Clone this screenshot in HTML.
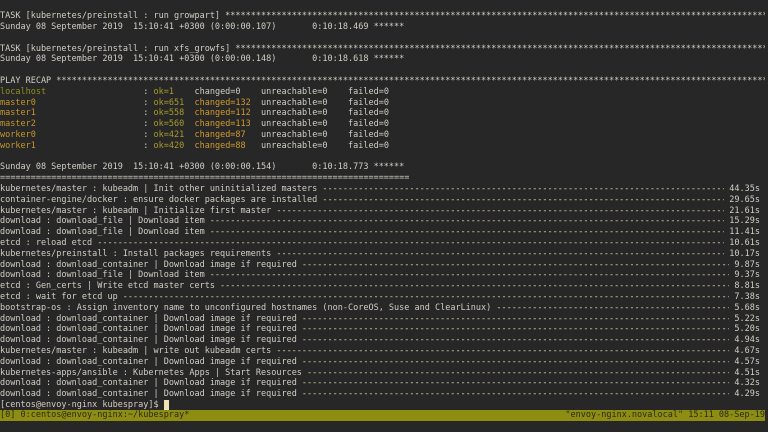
<!DOCTYPE html>
<html><head><meta charset="utf-8"><style>
html,body{margin:0;padding:0;background:#272727;width:768px;height:432px;overflow:hidden}
body{font-family:"DejaVu Sans Mono","Liberation Mono",monospace;font-size:8.5px;line-height:10.8px;color:#d2cec4}
.r{height:10.8px;white-space:pre;position:relative;top:0.5px}
.f{display:flex;width:760px}
.f .d{flex:1;overflow:hidden;margin:0 5.1px;color:#e0d6a8}
.st{width:765px;overflow:hidden}
.g{color:#8f8f1c}.y{color:#c4962a}.ok{color:#a89c2a}.ch{color:#d09a2e}
.bar{position:absolute;left:0;top:410.4px;width:765px;height:10.8px;background:#8d8d12;color:#2a2a1a;white-space:pre}
.bar .rt{position:absolute;right:0;top:0}
.cur{display:inline-block;width:5px;height:10px;background:#f0e2b6;vertical-align:top}
</style></head><body>
<div class="r"></div>
<div class="r st">TASK [kubernetes/preinstall : run growpart] ***************************************************************************************************************</div>
<div class="r">Sunday 08 September 2019  15:10:41 +0300 (0:00:00.107)       0:10:18.469 ******</div>
<div class="r"></div>
<div class="r st">TASK [kubernetes/preinstall : run xfs_growfs] *************************************************************************************************************</div>
<div class="r">Sunday 08 September 2019  15:10:41 +0300 (0:00:00.148)       0:10:18.618 ******</div>
<div class="r"></div>
<div class="r st">PLAY RECAP ****************************************************************************************************************************************************</div>
<div class="r"><span class="g">localhost</span>                   : <span class="ok">ok=1   </span> changed=0    unreachable=0    failed=0</div>
<div class="r"><span class="y">master0</span>                     : <span class="ok">ok=651 </span> <span class="ch">changed=132</span>  unreachable=0    failed=0</div>
<div class="r"><span class="y">master1</span>                     : <span class="ok">ok=558 </span> <span class="ch">changed=112</span>  unreachable=0    failed=0</div>
<div class="r"><span class="y">master2</span>                     : <span class="ok">ok=560 </span> <span class="ch">changed=113</span>  unreachable=0    failed=0</div>
<div class="r"><span class="y">worker0</span>                     : <span class="ok">ok=421 </span> <span class="ch">changed=87 </span>  unreachable=0    failed=0</div>
<div class="r"><span class="y">worker1</span>                     : <span class="ok">ok=420 </span> <span class="ch">changed=88 </span>  unreachable=0    failed=0</div>
<div class="r"></div>
<div class="r">Sunday 08 September 2019  15:10:41 +0300 (0:00:00.154)       0:10:18.773 ******</div>
<div class="r">================================================================================</div>
<div class="r f"><span>kubernetes/master : kubeadm | Init other uninitialized masters</span><span class="d">----------------------------------------------------------------------------------------------------------------------------------------------------</span><span>44.35s</span></div>
<div class="r f"><span>container-engine/docker : ensure docker packages are installed</span><span class="d">----------------------------------------------------------------------------------------------------------------------------------------------------</span><span>29.65s</span></div>
<div class="r f"><span>kubernetes/master : kubeadm | Initialize first master</span><span class="d">----------------------------------------------------------------------------------------------------------------------------------------------------</span><span>21.61s</span></div>
<div class="r f"><span>download : download_file | Download item</span><span class="d">----------------------------------------------------------------------------------------------------------------------------------------------------</span><span>15.29s</span></div>
<div class="r f"><span>download : download_file | Download item</span><span class="d">----------------------------------------------------------------------------------------------------------------------------------------------------</span><span>11.41s</span></div>
<div class="r f"><span>etcd : reload etcd</span><span class="d">----------------------------------------------------------------------------------------------------------------------------------------------------</span><span>10.61s</span></div>
<div class="r f"><span>kubernetes/preinstall : Install packages requirements</span><span class="d">----------------------------------------------------------------------------------------------------------------------------------------------------</span><span>10.17s</span></div>
<div class="r f"><span>download : download_container | Download image if required</span><span class="d">----------------------------------------------------------------------------------------------------------------------------------------------------</span><span>9.87s</span></div>
<div class="r f"><span>download : download_file | Download item</span><span class="d">----------------------------------------------------------------------------------------------------------------------------------------------------</span><span>9.37s</span></div>
<div class="r f"><span>etcd : Gen_certs | Write etcd master certs</span><span class="d">----------------------------------------------------------------------------------------------------------------------------------------------------</span><span>8.81s</span></div>
<div class="r f"><span>etcd : wait for etcd up</span><span class="d">----------------------------------------------------------------------------------------------------------------------------------------------------</span><span>7.38s</span></div>
<div class="r f"><span>bootstrap-os : Assign inventory name to unconfigured hostnames (non-CoreOS, Suse and ClearLinux)</span><span class="d">----------------------------------------------------------------------------------------------------------------------------------------------------</span><span>5.68s</span></div>
<div class="r f"><span>download : download_container | Download image if required</span><span class="d">----------------------------------------------------------------------------------------------------------------------------------------------------</span><span>5.22s</span></div>
<div class="r f"><span>download : download_container | Download image if required</span><span class="d">----------------------------------------------------------------------------------------------------------------------------------------------------</span><span>5.20s</span></div>
<div class="r f"><span>download : download_container | Download image if required</span><span class="d">----------------------------------------------------------------------------------------------------------------------------------------------------</span><span>4.94s</span></div>
<div class="r f"><span>kubernetes/master : kubeadm | write out kubeadm certs</span><span class="d">----------------------------------------------------------------------------------------------------------------------------------------------------</span><span>4.67s</span></div>
<div class="r f"><span>download : download_container | Download image if required</span><span class="d">----------------------------------------------------------------------------------------------------------------------------------------------------</span><span>4.57s</span></div>
<div class="r f"><span>kubernetes-apps/ansible : Kubernetes Apps | Start Resources</span><span class="d">----------------------------------------------------------------------------------------------------------------------------------------------------</span><span>4.51s</span></div>
<div class="r f"><span>download : download_container | Download image if required</span><span class="d">----------------------------------------------------------------------------------------------------------------------------------------------------</span><span>4.32s</span></div>
<div class="r f"><span>download : download_container | Download image if required</span><span class="d">----------------------------------------------------------------------------------------------------------------------------------------------------</span><span>4.29s</span></div>
<div class="r">[centos@envoy-nginx kubespray]$ <span class="cur"></span></div>
<div class="bar">[0] 0:centos@envoy-nginx:~/kubespray*<span class="rt">"envoy-nginx.novalocal" 15:11 08-Sep-19</span></div>
</body></html>
